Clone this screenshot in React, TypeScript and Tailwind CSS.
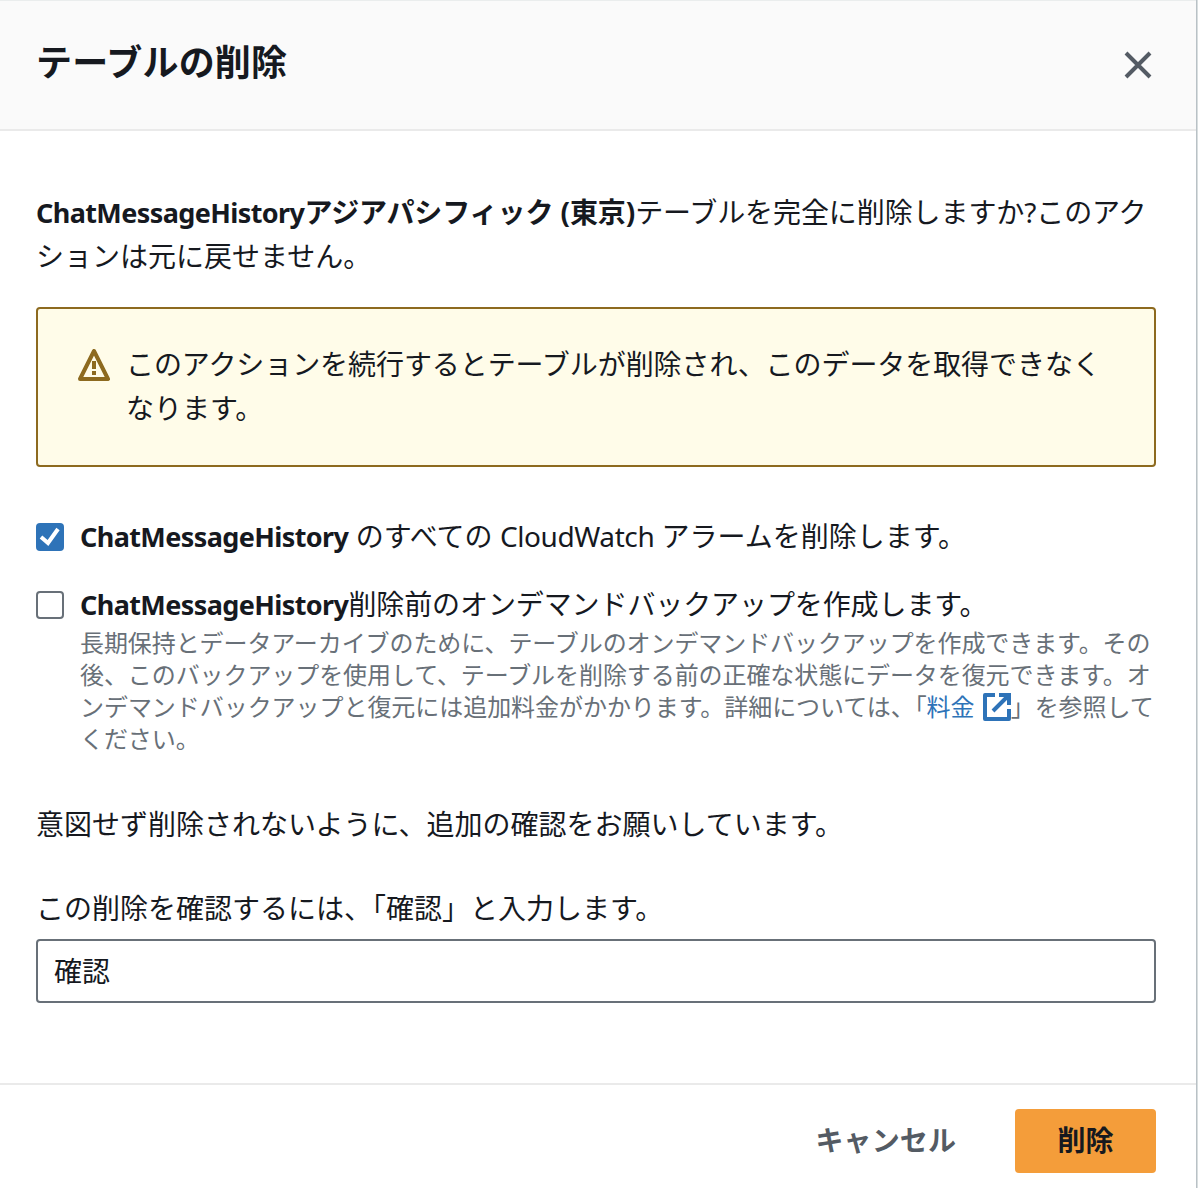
import type { ReactNode } from "react";

function Line({ children, className = "" }: { children: ReactNode; className?: string }) {
  return <span className={`block whitespace-nowrap ${className}`}>{children}</span>;
}

function Name() {
  return <b className="text-[27px] leading-none font-bold tracking-[-0.6px]">ChatMessageHistory</b>;
}

function CloseIcon() {
  return (
    <svg width="32" height="32" viewBox="0 0 16 16" fill="none" stroke="#545b64" strokeWidth="2">
      <path d="m2 2 12 12M14 2 2 14" />
    </svg>
  );
}

function WarningIcon() {
  return (
    <svg className="shrink-0" width="32" height="32" viewBox="0 0 16 16" fill="none" stroke="#8d6a1f" strokeWidth="2">
      <path strokeLinejoin="round" d="m8 1 7 14H1L8 1z" />
      <path d="M8 6v4M8 11v2" />
    </svg>
  );
}

function ExternalIcon() {
  return (
    <svg className="ml-0.5 inline-block align-[-5px]" width="28" height="28" viewBox="0 0 28 28" fill="none" stroke="#2e73b8" strokeWidth="4">
      <path strokeLinejoin="round" d="M12 2H2v24h24V16" />
      <path d="M16 2h10v10M26 2 10 18" />
    </svg>
  );
}

function Checkbox({ checked }: { checked?: boolean }) {
  return checked ? (
    <span className="mt-[9px] flex size-7 shrink-0 items-center justify-center rounded bg-[#2e73b8]">
      <svg width="28" height="28" viewBox="0 0 28 28" fill="none" stroke="#fff" strokeWidth="4">
        <path d="m5 14 7 6L22 6" />
      </svg>
    </span>
  ) : (
    <span className="mt-[9px] size-7 shrink-0 rounded border-2 border-[#687078] bg-white" />
  );
}

export default function App() {
  return (
    <div
      lang="ja"
      className="flex h-[1188px] w-[1198px] overflow-hidden bg-[#d5dbdb] font-['Noto_Sans','Noto_Sans_CJK_JP',sans-serif] text-[28px] leading-[44px] text-[#16191f]"
    >
      <div className="flex w-[1196px] flex-col border-t border-[#eaeded] bg-white">
        <header className="flex h-[130px] items-start justify-between border-b-2 border-[#eaeaea] bg-[#fafafa] pt-10 pr-[42px] pl-9">
          <h1 className="text-[36px] font-bold tracking-[0.2px]">テーブルの削除</h1>
          <button className="mt-2" aria-label="閉じる">
            <CloseIcon />
          </button>
        </header>
        <main className="flex grow flex-col px-9 pr-10 pt-[59px]">
          <p>
            <Line className="tracking-[-0.09px]">
              <Name />
              <b className="font-bold">アジアパシフィック (東京)</b>
              テーブルを完全に削除しますか?このアク
            </Line>
            <Line>ションは元に戻せません。</Line>
          </p>
          <div className="mt-[29px] flex h-40 gap-4 rounded border-2 border-[#8d6a1f] bg-[#fffce9] px-10 pt-[33px]">
            <div className="pt-[7px]">
              <WarningIcon />
            </div>
            <p>
              <Line className="tracking-[-0.07px]">このアクションを続行するとテーブルが削除され、このデータを取得できなく</Line>
              <Line>なります。</Line>
            </p>
          </div>
          <label className="mt-[47px] flex gap-4">
            <Checkbox checked />
            <Line>
              <Name /> のすべての <span className="tracking-[-0.4px]">CloudWatch</span> アラームを削除します。
            </Line>
          </label>
          <div className="mt-6 flex gap-4">
            <Checkbox />
            <div>
              <Line className="tracking-[-0.1px]">
                <Name />
                削除前のオンデマンドバックアップを作成します。
              </Line>
              <div className="mt-px text-[24px] leading-8 tracking-[-0.08px] text-[#687078]">
                <Line>長期保持とデータアーカイブのために、テーブルのオンデマンドバックアップを作成できます。その</Line>
                <Line>後、このバックアップを使用して、テーブルを削除する前の正確な状態にデータを復元できます。オ</Line>
                <Line className="h-8 tracking-[-0.05px]">
                  ンデマンドバックアップと復元には追加料金がかかります。詳細については、「
                  <a className="text-[#2e73b8]">
                    料金 <ExternalIcon />
                  </a>
                  」を参照して
                </Line>
                <Line>ください。</Line>
              </div>
            </div>
          </div>
          <p className="mt-[47px]">
            <Line>意図せず削除されないように、追加の確認をお願いしています。</Line>
          </p>
          <p className="mt-10">
            <Line>この削除を確認するには、「確認」と入力します。</Line>
          </p>
          <input
            className="mt-[9px] h-16 w-full rounded border-2 border-[#687078] bg-white px-4 pb-0.5 outline-none"
            defaultValue="確認"
          />
        </main>
        <footer className="flex h-[105px] items-start justify-end gap-[59px] border-t-2 border-[#eaeaea] pt-6 pr-10 font-bold">
          <button className="h-16 pb-0.5 tracking-[0.1px] text-[#545b64]">キャンセル</button>
          <button className="h-16 w-[141px] rounded bg-[#f49d3a] pb-0.5">削除</button>
        </footer>
      </div>
      <div className="w-0.5 border-l border-[#b9c1c6] bg-[#d8dedf]" />
    </div>
  );
}
